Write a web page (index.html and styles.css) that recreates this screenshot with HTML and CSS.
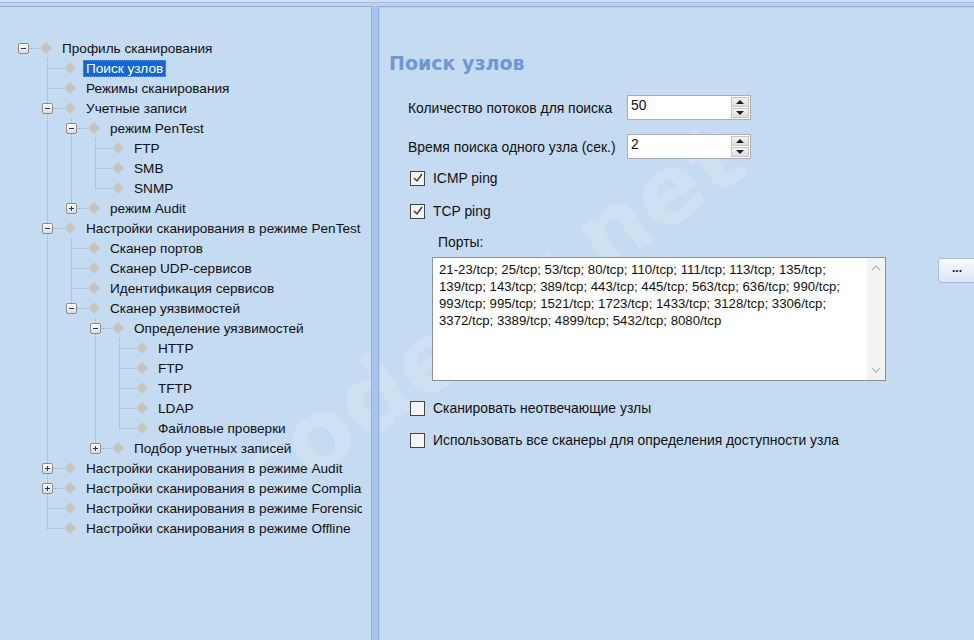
FILE: index.html
```html
<!DOCTYPE html>
<html lang="ru">
<head>
<meta charset="utf-8">
<title>Поиск узлов</title>
<link rel="stylesheet" href="styles.css">
</head>
<body>
<div class="window">
  <div class="topstrip"></div>
  <div class="main">
    <div class="left">
      <div class="tree">
        <div class="row"><span class="n root"><span class="slot"><span class="exp minus"></span></span><span class="dw"><span class="dia"></span></span></span><span class="t">Профиль сканирования</span></div>
        <div class="row"><span class="g"></span><span class="n full"><span class="slot"></span><span class="dw"><span class="dia"></span></span></span><span class="t sel">Поиск узлов</span></div>
        <div class="row"><span class="g"></span><span class="n full"><span class="slot"></span><span class="dw"><span class="dia"></span></span></span><span class="t">Режимы сканирования</span></div>
        <div class="row"><span class="g"></span><span class="n full"><span class="slot"><span class="exp minus"></span></span><span class="dw"><span class="dia"></span></span></span><span class="t">Учетные записи</span></div>
        <div class="row"><span class="g"></span><span class="g v"></span><span class="n full"><span class="slot"><span class="exp minus"></span></span><span class="dw"><span class="dia"></span></span></span><span class="t">режим PenTest</span></div>
        <div class="row"><span class="g"></span><span class="g v"></span><span class="g v"></span><span class="n full"><span class="slot"></span><span class="dw"><span class="dia"></span></span></span><span class="t">FTP</span></div>
        <div class="row"><span class="g"></span><span class="g v"></span><span class="g v"></span><span class="n full"><span class="slot"></span><span class="dw"><span class="dia"></span></span></span><span class="t">SMB</span></div>
        <div class="row"><span class="g"></span><span class="g v"></span><span class="g v"></span><span class="n up"><span class="slot"></span><span class="dw"><span class="dia"></span></span></span><span class="t">SNMP</span></div>
        <div class="row"><span class="g"></span><span class="g v"></span><span class="n up"><span class="slot"><span class="exp plus"></span></span><span class="dw"><span class="dia"></span></span></span><span class="t">режим Audit</span></div>
        <div class="row"><span class="g"></span><span class="n full"><span class="slot"><span class="exp minus"></span></span><span class="dw"><span class="dia"></span></span></span><span class="t">Настройки сканирования в режиме PenTest</span></div>
        <div class="row"><span class="g"></span><span class="g v"></span><span class="n full"><span class="slot"></span><span class="dw"><span class="dia"></span></span></span><span class="t">Сканер портов</span></div>
        <div class="row"><span class="g"></span><span class="g v"></span><span class="n full"><span class="slot"></span><span class="dw"><span class="dia"></span></span></span><span class="t">Сканер UDP-сервисов</span></div>
        <div class="row"><span class="g"></span><span class="g v"></span><span class="n full"><span class="slot"></span><span class="dw"><span class="dia"></span></span></span><span class="t">Идентификация сервисов</span></div>
        <div class="row"><span class="g"></span><span class="g v"></span><span class="n up"><span class="slot"><span class="exp minus"></span></span><span class="dw"><span class="dia"></span></span></span><span class="t">Сканер уязвимостей</span></div>
        <div class="row"><span class="g"></span><span class="g v"></span><span class="g"></span><span class="n full"><span class="slot"><span class="exp minus"></span></span><span class="dw"><span class="dia"></span></span></span><span class="t">Определение уязвимостей</span></div>
        <div class="row"><span class="g"></span><span class="g v"></span><span class="g"></span><span class="g v"></span><span class="n full"><span class="slot"></span><span class="dw"><span class="dia"></span></span></span><span class="t">HTTP</span></div>
        <div class="row"><span class="g"></span><span class="g v"></span><span class="g"></span><span class="g v"></span><span class="n full"><span class="slot"></span><span class="dw"><span class="dia"></span></span></span><span class="t">FTP</span></div>
        <div class="row"><span class="g"></span><span class="g v"></span><span class="g"></span><span class="g v"></span><span class="n full"><span class="slot"></span><span class="dw"><span class="dia"></span></span></span><span class="t">TFTP</span></div>
        <div class="row"><span class="g"></span><span class="g v"></span><span class="g"></span><span class="g v"></span><span class="n full"><span class="slot"></span><span class="dw"><span class="dia"></span></span></span><span class="t">LDAP</span></div>
        <div class="row"><span class="g"></span><span class="g v"></span><span class="g"></span><span class="g v"></span><span class="n up"><span class="slot"></span><span class="dw"><span class="dia"></span></span></span><span class="t">Файловые проверки</span></div>
        <div class="row"><span class="g"></span><span class="g v"></span><span class="g"></span><span class="n up"><span class="slot"><span class="exp plus"></span></span><span class="dw"><span class="dia"></span></span></span><span class="t">Подбор учетных записей</span></div>
        <div class="row"><span class="g"></span><span class="n full"><span class="slot"><span class="exp plus"></span></span><span class="dw"><span class="dia"></span></span></span><span class="t">Настройки сканирования в режиме Audit</span></div>
        <div class="row"><span class="g"></span><span class="n full"><span class="slot"><span class="exp plus"></span></span><span class="dw"><span class="dia"></span></span></span><span class="t">Настройки сканирования в режиме Compliance</span></div>
        <div class="row"><span class="g"></span><span class="n full"><span class="slot"></span><span class="dw"><span class="dia"></span></span></span><span class="t">Настройки сканирования в режиме Forensic</span></div>
        <div class="row"><span class="g"></span><span class="n up"><span class="slot"></span><span class="dw"><span class="dia"></span></span></span><span class="t">Настройки сканирования в режиме Offline</span></div>
      </div>
    </div>
    <div class="splitter"></div>
    <div class="right">
      <div class="title">Поиск узлов</div>
      <div class="form">
        <div class="field f1">
          <span class="label">Количество потоков для поиска</span>
          <div class="spin"><span class="val">50</span><span class="btns"><span class="sb"><span class="au"></span></span><span class="sb"><span class="ad"></span></span></span></div>
        </div>
        <div class="field f2">
          <span class="label">Время поиска одного узла (сек.)</span>
          <div class="spin"><span class="val">2</span><span class="btns"><span class="sb"><span class="au"></span></span><span class="sb"><span class="ad"></span></span></span></div>
        </div>
        <div class="check c1"><span class="box"><svg width="12" height="12" viewBox="0 0 12 12"><polyline points="2,6 5,9 10,2" fill="none" stroke="#3a3a3a" stroke-width="1.4"/></svg></span><span>ICMP ping</span></div>
        <div class="check c2"><span class="box"><svg width="12" height="12" viewBox="0 0 12 12"><polyline points="2,6 5,9 10,2" fill="none" stroke="#3a3a3a" stroke-width="1.4"/></svg></span><span>TCP ping</span></div>
        <div class="ports-label">Порты:</div>
        <div class="ports-row">
          <div class="memo">
            <div class="memo-text">
              <div>21-23/tcp; 25/tcp; 53/tcp; 80/tcp; 110/tcp; 111/tcp; 113/tcp; 135/tcp;</div>
              <div>139/tcp; 143/tcp; 389/tcp; 443/tcp; 445/tcp; 563/tcp; 636/tcp; 990/tcp;</div>
              <div>993/tcp; 995/tcp; 1521/tcp; 1723/tcp; 1433/tcp; 3128/tcp; 3306/tcp;</div>
              <div>3372/tcp; 3389/tcp; 4899/tcp; 5432/tcp; 8080/tcp</div>
            </div>
            <div class="vscroll">
              <svg width="18" height="14" viewBox="0 0 18 14"><polyline points="5,9 9,5 13,9" fill="none" stroke="#b9b9b9" stroke-width="1.3"/></svg>
              <svg width="18" height="14" viewBox="0 0 18 14"><polyline points="5,5 9,9 13,5" fill="none" stroke="#b9b9b9" stroke-width="1.3"/></svg>
            </div>
          </div>
          <div class="more">...</div>
        </div>
        <div class="check c3"><span class="box"></span><span>Сканировать неотвечающие узлы</span></div>
        <div class="check c4"><span class="box"></span><span>Использовать все сканеры для определения доступности узла</span></div>
      </div>
    </div>
  </div>
  <div class="watermark">codeby.net</div>
</div>
</body>
</html>
```

FILE: styles.css
```css
* { box-sizing: border-box; }
html, body { margin: 0; padding: 0; }
body {
  width: 974px;
  height: 640px;
  overflow: hidden;
  background: #c5dbf1;
  font-family: "Liberation Sans", Arial, sans-serif;
  font-size: 13.9px;
  color: #101010;
}
.window {
  position: relative;
  width: 974px;
  height: 640px;
  display: flex;
  flex-direction: column;
  overflow: hidden;
  background: #c5dbf1;
}
.topstrip {
  height: 6px;
  flex: none;
  background: linear-gradient(#cde0f5 0 2px, #a3bbe6 2px 3px, #bcd3f1 3px 6px);
}
.main {
  flex: 1;
  display: flex;
  min-height: 0;
  position: relative;
  z-index: 1;
}
.left {
  width: 372px;
  flex: none;
  border-top: 1px solid #93aedf;
  border-right: 1px solid #93aedf;
  overflow: hidden;
}
.tree {
  width: 362px;
  overflow: hidden;
  padding-top: 31px;
  font-size: 13.6px;
}
.row {
  display: flex;
  height: 20px;
  padding-left: 11px;
  white-space: nowrap;
}
.g {
  width: 24px;
  flex: none;
}
.g.v {
  background: repeating-linear-gradient(to bottom, #a2adc0 0 1px, transparent 1px 2px) 12px 0 / 1px 20px no-repeat;
}
.n {
  width: 51px;
  flex: none;
  display: flex;
  align-items: center;
  background-repeat: no-repeat;
}
.n.root {
  background-image: repeating-linear-gradient(to right, #a2adc0 0 1px, transparent 1px 2px);
  background-position: 12px 10px;
  background-size: 18px 1px;
}
.n.full {
  background-image:
    repeating-linear-gradient(to right, #a2adc0 0 1px, transparent 1px 2px),
    repeating-linear-gradient(to bottom, #a2adc0 0 1px, transparent 1px 2px);
  background-position: 12px 10px, 12px 0;
  background-size: 18px 1px, 1px 20px;
}
.n.up {
  background-image:
    repeating-linear-gradient(to right, #a2adc0 0 1px, transparent 1px 2px),
    repeating-linear-gradient(to bottom, #a2adc0 0 1px, transparent 1px 2px);
  background-position: 12px 10px, 12px 0;
  background-size: 18px 1px, 1px 10px;
}
.slot {
  width: 25px;
  height: 20px;
  flex: none;
  display: flex;
  align-items: center;
}
.exp {
  margin-left: 7px;
  width: 11px;
  height: 11px;
  border: 1px solid #8c8c8c;
  border-radius: 2px;
}
.exp.minus {
  background:
    linear-gradient(#1d3a74, #1d3a74) center / 5px 1px no-repeat,
    linear-gradient(#ffffff, #dcdcdc);
}
.exp.plus {
  background:
    linear-gradient(#1d3a74, #1d3a74) center / 5px 1px no-repeat,
    linear-gradient(#1d3a74, #1d3a74) center / 1px 5px no-repeat,
    linear-gradient(#ffffff, #dcdcdc);
}
.dw {
  width: 20px;
  height: 20px;
  flex: none;
  display: flex;
  align-items: center;
  justify-content: center;
}
.dia {
  width: 8px;
  height: 8px;
  background: #c9c4bc;
  transform: rotate(45deg);
}
.t {
  align-self: center;
  margin-left: -3px;
  padding: 0 2px;
  border: 1px dotted transparent;
  line-height: 15px;
}
.t.sel {
  background: #1565d4;
  color: #ffffff;
  border-color: #c98b35;
}
.splitter {
  width: 7px;
  flex: none;
  background: #a9c5ee;
  border-right: 1px solid #93aedf;
}
.right {
  flex: 1;
  border-top: 1px solid #93aedf;
  border-right: 3px solid #a9c4ec;
  box-shadow: inset 1px 1px 0 #b7cff1, inset -1px 0 0 #93aedf;
  padding-left: 10px;
}
.title {
  margin-top: 45px;
  font-family: "DejaVu Sans", sans-serif;
  font-weight: bold;
  font-size: 19px;
  line-height: 22px;
  color: #6f96d6;
}
.form {
  padding-left: 19px;
  display: flex;
  flex-direction: column;
}
.field {
  display: flex;
  align-items: center;
  height: 25px;
}
.f1 { margin-top: 21px; }
.f2 { margin-top: 14px; }
.label {
  width: 219px;
  flex: none;
}
.spin {
  width: 124px;
  height: 25px;
  border: 1px solid #abadb3;
  background: #ffffff;
  display: flex;
}
.val {
  flex: 1;
  padding-left: 3px;
  line-height: 19px;
}
.btns {
  width: 19px;
  display: flex;
  flex-direction: column;
  padding: 1px 1px 1px 0;
  gap: 1px;
}
.sb {
  flex: 1;
  background: linear-gradient(#f3f3f3, #dddddd);
  border: 1px solid #c5c5c5;
  display: flex;
  align-items: center;
  justify-content: center;
}
.au {
  width: 0;
  height: 0;
  border-left: 4px solid transparent;
  border-right: 4px solid transparent;
  border-bottom: 4px solid #1e1e1e;
}
.ad {
  width: 0;
  height: 0;
  border-left: 4px solid transparent;
  border-right: 4px solid transparent;
  border-top: 4px solid #1e1e1e;
}
.check {
  display: flex;
  align-items: center;
  height: 20px;
  padding-left: 2px;
  gap: 8px;
}
.c1 { margin-top: 9px; }
.c2 { margin-top: 13px; }
.c3 { margin-top: 17px; }
.c4 { margin-top: 12px; }
.box {
  width: 15px;
  height: 15px;
  flex: none;
  border: 1px solid #444444;
  background: #f6f6f6;
  display: flex;
  align-items: center;
  justify-content: center;
}
.ports-label {
  margin-top: 13px;
  padding-left: 30px;
  line-height: 16px;
}
.ports-row {
  margin-top: 7px;
  padding-left: 24px;
  display: flex;
  align-items: flex-start;
}
.memo {
  width: 454px;
  height: 124px;
  flex: none;
  border: 1px solid #8e8f8f;
  background: #ffffff;
  display: flex;
}
.memo-text {
  flex: 1;
  padding: 3px 0 0 6px;
  line-height: 17px;
  font-size: 13.2px;
  white-space: nowrap;
}
.vscroll {
  width: 18px;
  flex: none;
  background: #f3f3f3;
  display: flex;
  flex-direction: column;
  justify-content: space-between;
  padding: 3px 0;
}
.more {
  margin-left: 52px;
  margin-top: 1px;
  width: 44px;
  height: 25px;
  flex: none;
  border: 1px solid #a9bcd6;
  border-radius: 3px;
  background: linear-gradient(#f6f9fd, #dbe6f3);
  font-weight: bold;
  font-size: 12px;
  line-height: 18px;
  padding-left: 13px;
}
.watermark {
  position: absolute;
  z-index: 0;
  left: 488px;
  top: 316px;
  transform: translate(-50%, -50%) rotate(-35deg);
  font-family: "DejaVu Sans", sans-serif;
  font-weight: bold;
  font-size: 96px;
  color: rgba(255, 255, 255, 0.17);
  white-space: nowrap;
  pointer-events: none;
}
```
